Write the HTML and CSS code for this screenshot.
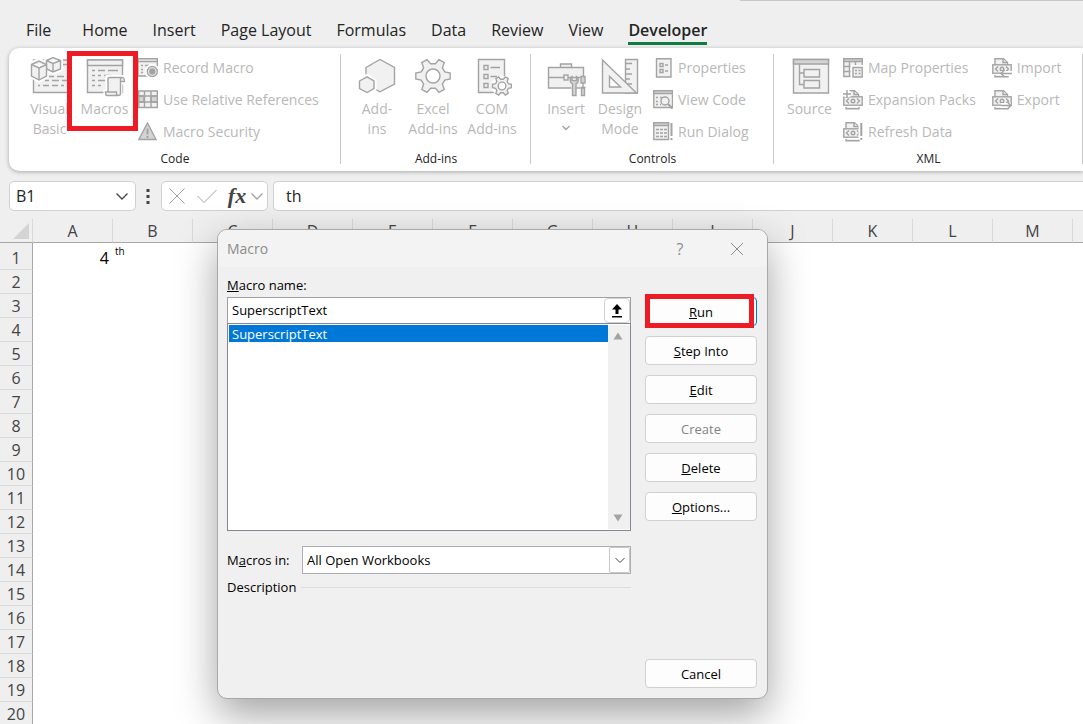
FILE: index.html
```html
<!DOCTYPE html>
<html lang="en">

<head>
  <meta charset="UTF-8" />
  <meta name="viewport" content="width=device-width, initial-scale=1.0" />
  <title>Excel - Macro</title>
  <link rel="stylesheet" href="styles.css">
</head>

<body>
  <svg class="symbols" aria-hidden="true">
    <symbol id="gear" viewBox="-20 -20 40 40">
      <path d="M11.8-4.1L17.2-3V3L11.8 4.1L9.4 8.2L11.2 13.4L6 16.4L2.4 12.3H-2.4L-6 16.4L-11.2 13.4L-9.4 8.2L-11.8 4.1L-17.2 3V-3L-11.8-4.1L-9.4-8.2L-11.2-13.4L-6-16.4L-2.4-12.3H2.4L6-16.4L11.2-13.4L9.4-8.2Z" vector-effect="non-scaling-stroke" />
      <circle r="7" fill="#fff" vector-effect="non-scaling-stroke" />
    </symbol>
    <symbol id="xml-doc" viewBox="0 0 20 20">
      <path d="M3 7V.7H11.5L15.5 4.5V7" />
      <path d="M11 1V4.5H15" />
      <rect x=".8" y="6.8" width="18.4" height="8.4" />
      <path d="M6 8.5L3.5 11L6 13.5M14 8.5L16.5 11L14 13.5" />
      <circle cx="10" cy="11" r="1.8" />
      <path d="M3 17V18.8H16V17" />
    </symbol>
  </svg>

  <header>
    <div class="title-search"></div>
    <nav class="tabs">
      <a href="#" class="file">File</a>
      <a href="#">Home</a>
      <a href="#">Insert</a>
      <a href="#">Page Layout</a>
      <a href="#">Formulas</a>
      <a href="#">Data</a>
      <a href="#">Review</a>
      <a href="#">View</a>
      <a href="#" class="active">Developer</a>
    </nav>
  </header>

  <div class="ribbon">
    <section class="group group-code">
      <div class="tools">
        <button class="big" disabled>
          <svg viewBox="0 0 40 40">
            <path d="M3.5 3H40V35.5H3.5Z" />
            <path d="M3 7.5H40" />
            <path d="M19 19.5H24M27 19.5H34M15 23.5H19M22 23.5H29M32 23.5H38M8 28.5H10M13 28.5H19M22 28.5H28M31 28.5H34" />
            <path class="halo" d="M1.5 7L9 3.5L16 7V19L9 23L1.5 19ZM16.5 3L23 0L30.5 3V12L23 15L16.5 12Z" />
            <path d="M16.5 3.5L23 .6L30.5 3.5V12L23 15L16.5 12ZM16.5 3.5L23 6.5L30.5 3.5M23 6.5V15" />
            <path d="M1.5 7.5L9 4L16.5 7.5V19L9 23L1.5 19ZM1.5 7.5L9 11L16.5 7.5M9 11V23" />
          </svg>
          <span>Visual Basic</span>
        </button>
        <button class="big" disabled>
          <svg viewBox="0 0 40 40">
            <path d="M2.5 3H37.5V35.5H2.5Z" />
            <path d="M2.5 3H37.5V8.5H2.5Z" />
            <path d="M7 13.5H10M13 13.5H20M23 13.5H33M7 18.5H10M13 18.5H16M19 18.5H26M7 23.5H10M13 23.5H20M7 28.5H10M13 28.5H16" />
            <path class="halo" d="M23 20.5H38V25H35V38.5H21V35H23Z" />
            <path d="M24.5 20.5H37C39 20.5 39.5 22 39.5 24.5H35.5V36.5C35.5 38 34.5 38.5 33 38.5H22C20.5 38.5 20.5 35 20.5 35H23V22C23 21 23.5 20.5 24.5 20.5ZM23 35H31.5V37C31.5 38 32.5 38.5 33.5 38.5M35.5 24.5V22C35.5 21 36 20.5 37 20.5" />
          </svg>
          <span>Macros</span>
          <i class="highlight"></i>
        </button>
        <div class="small-list">
          <button class="small" disabled>
            <svg viewBox="0 0 20 20">
              <path d="M0 .7H19.3V18H0Z" />
              <path d="M0 3.5H19.3M3 7.5H5M7 7.5H11M3 11.5H5M3 14.5H5" />
              <circle class="halo" cx="14.3" cy="13.5" r="5" />
              <circle cx="14.3" cy="13.5" r="5" />
              <circle class="solid" cx="14.3" cy="13.5" r="2.5" />
            </svg>
            Record Macro
          </button>
          <button class="small" disabled>
            <svg viewBox="0 0 20 20">
              <path d="M.7 1H19.3V17.5H.7Z" />
              <path class="shade" d="M.7 6H6V12H.7ZM13 6H19.3V12H13Z" />
              <path d="M.7 6H19.3M.7 12H19.3M6.5 1V17.5M13 1V17.5" />
            </svg>
            Use Relative References
          </button>
          <button class="small" disabled>
            <svg viewBox="0 0 20 20">
              <path class="shade" d="M9.5 1L18 17.5H.8Z" />
              <path class="thick" d="M9.5 6.5V12.5M9.5 14V16" />
            </svg>
            Macro Security
          </button>
        </div>
      </div>
      <h2>Code</h2>
    </section>

    <section class="group group-addins">
      <div class="tools">
        <button class="big" disabled>
          <svg viewBox="0 0 40 40">
            <path d="M9 10.5L23 2.5L37.5 10.5V27L23 34.8L9 27Z" />
            <path class="halo" d="M2.5 24L10 19.5L17 24V31.5L10 35.5L2.5 31.5Z" />
            <path d="M2.5 24L10 19.8L17 24V31.5L10 35.5L2.5 31.5Z" />
          </svg>
          <span>Add-<br>ins</span>
        </button>
        <button class="big" disabled>
          <svg viewBox="0 0 40 40">
            <use href="#gear" x="0" y="-1" width="40" height="40" />
          </svg>
          <span>Excel Add-ins</span>
        </button>
        <button class="big" disabled>
          <svg viewBox="0 0 40 40">
            <path d="M6.5 2.5H32.5V35.5H6.5Z" />
            <path d="M12 8.5H16V12.5H12ZM12 17.5H16V21.5H12ZM12 26.5H16V30.5H12ZM18.5 10.5H28M18.5 19.5H25" />
            <circle class="halo" cx="30" cy="29" r="8" />
            <use href="#gear" x="19" y="18" width="22" height="22" />
          </svg>
          <span>COM Add-ins</span>
        </button>
      </div>
      <h2>Add-ins</h2>
    </section>

    <section class="group group-controls">
      <div class="tools">
        <button class="big" disabled>
          <svg viewBox="0 0 40 40">
            <path d="M2.5 10.5H37.5V31H2.5ZM14.5 10.5V7H25.5V10.5M2.5 20.5H18M22 20.5H37" />
            <rect x="18" y="18" width="4" height="5" />
            <path class="halo" d="M28 22V37M37 20V37" />
            <path class="shade" d="M26 19.5V23.5H30.5V19.5C33 21 33 25.5 30 27V38.5H26.5V27C23.5 25.5 23.5 21 26 19.5Z" />
            <path class="shade" d="M35 19.5H39V26H35ZM37 26V30M34.5 30.5H39.5M35.5 31H38.5V38.5H35.5Z" />
          </svg>
          <span>Insert</span>
          <svg class="caret" viewBox="0 0 10 10"><path d="M1.5 3L5 6.5L8.5 3" /></svg>
        </button>
        <button class="big" disabled>
          <svg viewBox="0 0 40 40">
            <path d="M25.5 2.5H37.5V36H25.5Z" />
            <path d="M25.5 6.5H32M25.5 12H30M25.5 17H32M25.5 22H30M25.5 27H32" />
            <path d="M2.5 3L36.5 36H2.5Z" />
            <path class="paper" d="M9.5 19.5V30H20.5Z" />
          </svg>
          <span>Design Mode</span>
        </button>
        <div class="small-list">
          <button class="small" disabled>
            <svg viewBox="0 0 20 20">
              <path d="M3.5 .7H18V19H3.5Z" />
              <path d="M7 5.5H10V8.5H7ZM7 11.5H10V14.5H7ZM12 7H15M12 13H15" />
            </svg>
            Properties
          </button>
          <button class="small" disabled>
            <svg viewBox="0 0 20 20">
              <path d="M.8 .7H19.5V17.5H.8Z" />
              <path class="shade" d="M.8 .7H19.5V3.5H.8Z" />
              <path d="M3 7.5H5M3 11.5H5M3 14.5H5M7 7.5H9M7 14.5H8" />
              <circle cx="12" cy="11" r="4" />
              <path class="thick" d="M15 14L19.5 18.5" />
            </svg>
            View Code
          </button>
          <button class="small" disabled>
            <svg viewBox="0 0 20 20">
              <path d="M15.5 .7H.8V17.5H15.5Z" />
              <path class="shade" d="M.8 .7H15.5V3.5H.8Z" />
              <path d="M3 7.5H6M7 7.5H10M11 7.5H14M3 11H6M7 11H10M11 11H14M3 14.5H6M7 14.5H10M11 14.5H14" />
              <path class="thick" d="M18.5 1V14M18.5 16V18" />
            </svg>
            Run Dialog
          </button>
        </div>
      </div>
      <h2>Controls</h2>
    </section>

    <section class="group group-xml">
      <div class="tools">
        <button class="big" disabled>
          <svg viewBox="0 0 40 40">
            <path d="M3.5 2.5H38.5V36H3.5Z" />
            <path class="shade" d="M3.5 2.5H38.5V7H3.5Z" />
            <path d="M9.5 7V27.5H14M9.5 16H14" />
            <path d="M14 12.5H29.5V20H14ZM14 23.5H29.5V31H14Z" />
          </svg>
          <span>Source</span>
        </button>
        <div class="small-list">
          <button class="small" disabled>
            <svg viewBox="0 0 20 20">
              <path d="M.8 .7H19.2V18.5H.8Z" />
              <path class="shade" d="M.8 .7H19.2V3.5H.8Z" />
              <path d="M6.5 3.5V18.5M12.5 3.5V9M.8 8.5H12M.8 13.5H9" />
              <path class="halo" d="M10 9.5H19.2V19H10Z" />
              <path d="M10 9.5H19.2V19H10Z" />
              <path d="M12 12.5H14M15.5 12.5H17.5M12 15.5H14M15.5 15.5H17.5" />
            </svg>
            Map Properties
          </button>
          <button class="small" disabled>
            <svg viewBox="0 0 20 20">
              <use href="#xml-doc" width="20" height="20" />
              <path class="halo" d="M4 0V7M0 4H8" />
              <path d="M4 0V8M0 4H8" />
            </svg>
            Expansion Packs
          </button>
          <button class="small" disabled>
            <svg viewBox="0 0 20 20">
              <use href="#xml-doc" width="20" height="20" />
              <path class="halo" d="M18 1V18" />
              <path class="thick" d="M18.3 1V14M18.3 16V18" />
            </svg>
            Refresh Data
          </button>
        </div>
        <div class="small-list small-list-second">
          <button class="small" disabled>
            <svg viewBox="0 0 20 20">
              <use href="#xml-doc" width="20" height="20" />
              <path class="halo" d="M20 15.5H9" />
              <path d="M20 15.5H9M12.5 12L9 15.5L12.5 19" />
            </svg>
            Import
          </button>
          <button class="small" disabled>
            <svg viewBox="0 0 20 20">
              <use href="#xml-doc" width="20" height="20" />
              <path class="halo" d="M9 15.5H19" />
              <path d="M9 15.5H19M15.5 12L19 15.5L15.5 19" />
            </svg>
            Export
          </button>
        </div>
      </div>
      <h2>XML</h2>
    </section>
  </div>

  <div class="formula-bar">
    <div class="name-box">
      <input type="text" value="B1" aria-label="Name Box">
      <button aria-label="Open name list">
        <svg viewBox="0 0 14 14"><path d="M1.5 4.5L7 10L12.500 4.5" /></svg>
      </button>
    </div>
    <svg class="dots" viewBox="0 0 4 16"><path d="M.5 1H3.5V4H.5ZM.5 7H3.5V10H.5ZM.5 13H3.5V16H.5Z" /></svg>
    <div class="fx-box">
      <button aria-label="Cancel entry"><svg viewBox="0 0 20 20"><path d="M2.5 2.5L17.5 17.5M17.5 2.5L2.5 17.5" /></svg></button>
      <button aria-label="Enter"><svg viewBox="0 0 20 20"><path d="M.5 10L7 16.5L19.5 4" /></svg></button>
      <button class="fx">fx</button>
      <button class="fx-more" aria-label="More functions"><svg viewBox="0 0 14 14"><path d="M1.5 4.5L7 10L12.5 4.5" /></svg></button>
    </div>
    <input class="formula" type="text" value="th" aria-label="Formula">
  </div>

  <main class="sheet">
    <table>
      <thead>
        <tr>
          <th class="corner"><svg viewBox="0 0 18 18"><path d="M17 1V17H1Z" /></svg></th>
          <th>A</th><th>B</th><th>C</th><th>D</th><th>E</th><th>F</th><th>G</th>
          <th>H</th><th>I</th><th>J</th><th>K</th><th>L</th><th>M</th><th></th>
        </tr>
      </thead>
      <tbody>
        <tr class="first"><th>1</th><td class="number">4</td><td class="super">th</td><td colspan="12"></td></tr>
        <tr><th>2</th><td colspan="14"></td></tr>
        <tr><th>3</th><td colspan="14"></td></tr>
        <tr><th>4</th><td colspan="14"></td></tr>
        <tr><th>5</th><td colspan="14"></td></tr>
        <tr><th>6</th><td colspan="14"></td></tr>
        <tr><th>7</th><td colspan="14"></td></tr>
        <tr><th>8</th><td colspan="14"></td></tr>
        <tr><th>9</th><td colspan="14"></td></tr>
        <tr><th>10</th><td colspan="14"></td></tr>
        <tr><th>11</th><td colspan="14"></td></tr>
        <tr><th>12</th><td colspan="14"></td></tr>
        <tr><th>13</th><td colspan="14"></td></tr>
        <tr><th>14</th><td colspan="14"></td></tr>
        <tr><th>15</th><td colspan="14"></td></tr>
        <tr><th>16</th><td colspan="14"></td></tr>
        <tr><th>17</th><td colspan="14"></td></tr>
        <tr><th>18</th><td colspan="14"></td></tr>
        <tr><th>19</th><td colspan="14"></td></tr>
        <tr><th>20</th><td colspan="14"></td></tr>
      </tbody>
    </table>
  </main>

  <div class="dialog" role="dialog" aria-labelledby="dialog-title">
    <div class="dialog-title">
      <h1 id="dialog-title">Macro</h1>
      <button aria-label="Help">?</button>
      <button aria-label="Close"><svg viewBox="0 0 14 14"><path d="M1 1L13 13M13 1L1 13" /></svg></button>
    </div>
    <div class="dialog-body">
      <div class="fields">
        <label class="name-label" for="macro-name"><u>M</u>acro name:</label>
        <div class="macro-name">
          <input id="macro-name" type="text" value="SuperscriptText">
          <button aria-label="Collapse dialog">
            <svg viewBox="0 0 12 14"><path d="M6 0L11 5.5H7.5V10H4.5V5.5H1ZM1 12H11V13.5H1Z" /></svg>
          </button>
        </div>
        <div class="macro-list">
          <select size="11" aria-label="Macros">
            <option selected>SuperscriptText</option>
          </select>
          <div class="scrollbar">
            <svg viewBox="0 0 10 8"><path d="M5 .5L9.5 7.5H.5Z" /></svg>
            <svg viewBox="0 0 10 8"><path d="M5 7.5L9.5 .5H.5Z" /></svg>
          </div>
        </div>
        <div class="macros-in">
          <label for="macros-in">M<u>a</u>cros in:</label>
          <div class="combo">
            <select id="macros-in">
              <option>All Open Workbooks</option>
            </select>
            <span class="combo-arrow"><svg viewBox="0 0 10 10"><path d="M.5 3L5 7.5L9.5 3" /></svg></span>
          </div>
        </div>
        <div class="description">Description</div>
      </div>
      <div class="actions">
        <button class="default"><u>R</u>un<i class="highlight"></i></button>
        <button><u>S</u>tep Into</button>
        <button><u>E</u>dit</button>
        <button disabled>Create</button>
        <button><u>D</u>elete</button>
        <button><u>O</u>ptions...</button>
        <button class="cancel">Cancel</button>
      </div>
    </div>
  </div>
</body>

</html>
```
FILE: styles.css
```css
* {
  box-sizing: border-box;
}
body {
  margin: 0;
  height: 100vh;
  overflow: hidden;
  display: flex;
  flex-direction: column;
  position: relative;
  background: #efefef;
  color: #242424;
  font-family: "Open Sans", "Noto Sans", sans-serif;
  font-size: 16px;
}
button, input, select {
  font: inherit;
  color: inherit;
  margin: 0;
  padding: 0;
  border: none;
  background: none;
  outline: none;
}
svg {
  display: block;
  fill: none;
  stroke: #a3a3a3;
}
.symbols {
  position: absolute;
  width: 0;
  height: 0;
}

/* tabs */
header {
  height: 48px;
  flex: none;
  display: flex;
  flex-direction: column;
}
.title-search {
  align-self: flex-end;
  width: 343px;
  height: 1px;
  background: #c8c8c8;
}
.tabs {
  display: flex;
  gap: 25px;
  padding: 15px 26px 0;
}
.tabs a {
  height: 29px;
  line-height: 28px;
  color: #242424;
  text-decoration: none;
  white-space: nowrap;
}
.tabs .file {
  margin-right: 6px;
}
.tabs .active {
  font-weight: 600;
  border-bottom: 3px solid #107c41;
}

/* ribbon */
.ribbon {
  flex: none;
  margin-left: 9px;
  height: 123px;
  display: flex;
  background: #fff;
  border-radius: 10px 0 0 10px;
  box-shadow: 0 1px 4px rgba(0, 0, 0, 0.3);
}
.group {
  flex: none;
  position: relative;
  display: flex;
  flex-direction: column;
  padding-top: 4px;
}
.group::after {
  content: "";
  position: absolute;
  right: 0;
  top: 6px;
  bottom: 7px;
  width: 1px;
  background: #c8c8c8;
}
.group-code {
  width: 332px;
}
.group-addins {
  width: 190px;
}
.group-controls {
  width: 243px;
}
.group-xml {
  width: 309px;
}
.group h2 {
  margin: 0;
  font-size: 12px;
  font-weight: 400;
  line-height: 24px;
  text-align: center;
}
.tools {
  display: flex;
  height: 95px;
  padding-left: 8px;
}
.group-code .tools {
  padding-left: 13px;
}
.big {
  position: relative;
  width: 55px;
  padding-top: 5px;
  display: flex;
  flex-direction: column;
  align-items: center;
  font-size: 14px;
  line-height: 20px;
  color: #b8b8b8;
}
.group-addins .big {
  width: 56px;
}
.group-addins .big:last-child {
  width: 62px;
}
.group-controls .big {
  width: 54px;
}
.big svg {
  flex: none;
  width: 40px;
  height: 40px;
  margin-bottom: 2px;
}
.big .caret {
  width: 10px;
  height: 10px;
  margin-top: 4px;
}
.big path, .big rect, .small path, .small rect, .small circle {
  fill: #f1f1f1;
}
.big .caret path {
  fill: none;
}
.big .halo, .small .halo, .big .paper {
  fill: #fff;
}
.big svg, .small svg {
  fill: #f1f1f1;
  stroke-width: 1.4px;
}
.ribbon .halo {
  stroke: #fff;
  stroke-width: 5px;
}
.ribbon .shade {
  fill: #d4d4d4;
}
.ribbon .solid {
  fill: #a3a3a3;
}
.ribbon .thick {
  fill: none;
  stroke-width: 2px;
}
.small-list {
  margin-left: 6px;
}
.small-list-second {
  margin-left: 16px;
}
.small {
  display: flex;
  align-items: center;
  gap: 5px;
  height: 32px;
  padding-bottom: 1px;
  font-size: 14px;
  color: #b8b8b8;
  white-space: nowrap;
}
.small svg {
  width: 20px;
  height: 20px;
}
.highlight {
  position: absolute;
  border: 5px solid #ed1c24;
}
.big .highlight {
  inset: -1px -6px 16px -10px;
  z-index: 1;
}

/* formula bar */
.formula-bar {
  flex: none;
  display: flex;
  align-items: center;
  height: 30px;
  margin: 10px 0 8px 9px;
}
.name-box, .fx-box, .formula {
  height: 30px;
  border: 1px solid #d0d0d0;
  border-radius: 5px;
  background: #fff;
}
.name-box {
  display: flex;
  align-items: center;
  width: 127px;
  padding: 0 6px;
}
.name-box input {
  flex: 1;
  min-width: 0;
}
.name-box svg, .fx-more svg {
  width: 14px;
  height: 14px;
  stroke: #444;
  stroke-width: 1.3px;
}
.dots {
  width: 4px;
  height: 16px;
  margin: 0 11px 0 10px;
  fill: #444;
  stroke: none;
}
.fx-box {
  display: flex;
  align-items: center;
  gap: 10px;
  width: 107px;
  padding-left: 5px;
  margin-right: 5px;
}
.fx-box svg {
  width: 20px;
  height: 20px;
}
.fx-box .fx-more svg {
  width: 14px;
  height: 14px;
  stroke: #a3a3a3;
}
.fx {
  width: 20px;
  font-family: "Liberation Serif", serif;
  font-size: 22px;
  font-style: italic;
  font-weight: 700;
  line-height: 24px;
  color: #444;
}
.fx-box .fx-more {
  margin-left: -7px;
}
.formula {
  flex: 1;
  padding-left: 12px;
  border-right: none;
  border-radius: 5px 0 0 5px;
}

/* sheet */
.sheet {
  flex: 1;
  min-height: 0;
  overflow: hidden;
}
.sheet table {
  width: 1153px;
  table-layout: fixed;
  border-collapse: separate;
  border-spacing: 0;
  background: #fff;
}
.sheet th {
  height: 24px;
  padding: 0;
  background: #efefef;
  color: #444;
  font-weight: 400;
  line-height: 20px;
  border-right: 1px solid #d9d9d9;
  border-bottom: 1px solid #a8a8a8;
}
.sheet thead th {
  width: 80px;
}
.sheet thead .corner {
  width: 33px;
}
.corner svg {
  width: 18px;
  height: 18px;
  margin-left: 12px;
  fill: #d4d4d4;
  stroke: none;
}
.sheet tbody th {
  border-right-color: #a8a8a8;
  border-bottom-color: #d9d9d9;
}
.sheet td {
  padding: 0;
  line-height: 20px;
  color: #000;
}
.sheet .first th {
  height: 27px;
  padding-top: 4px;
}
.sheet .number {
  padding: 3px 4px 0 0;
  text-align: right;
}
.sheet .super {
  padding: 0 0 0 2px;
  font-size: 10px;
  line-height: 16px;
  vertical-align: top;
}

/* macro dialog */
.dialog {
  position: absolute;
  left: 217px;
  top: 229px;
  width: 551px;
  border: 1px solid #a8a8a8;
  border-radius: 10px;
  background: #f0f0f0;
  box-shadow: 0 16px 40px rgba(0, 0, 0, 0.36);
  color: #000;
  font-size: 13px;
  overflow: hidden;
}
.dialog-title {
  display: flex;
  align-items: center;
  height: 37px;
  padding: 0 15px 0 9px;
  background: #f3f3f3;
  color: #8c8c8c;
}
.dialog-title h1 {
  flex: 1;
  margin: 0;
  font-size: 14px;
  font-weight: 400;
}
.dialog-title button {
  display: flex;
  justify-content: center;
  width: 30px;
  margin-left: 27px;
  font-size: 16px;
}
.dialog-title svg {
  width: 14px;
  height: 14px;
  stroke: #8c8c8c;
}
.dialog-body {
  display: flex;
  gap: 14px;
  padding: 9px 10px 10px 9px;
}
.fields {
  flex: 1;
}
.name-label {
  display: block;
  height: 21px;
  line-height: 18px;
}
.macro-name {
  display: flex;
  height: 26px;
  border: 1px solid #a0a0a0;
  border-bottom: none;
  background: #fff;
}
.macro-name input {
  flex: 1;
  min-width: 0;
  padding: 0 0 2px 4px;
}
.macro-name button {
  display: flex;
  align-items: center;
  justify-content: center;
  width: 26px;
  border: 1px solid #d0d0d0;
  border-radius: 4px;
}
.macro-name svg {
  width: 12px;
  height: 14px;
  fill: #000;
  stroke: none;
}
.macro-list {
  display: flex;
  height: 208px;
  padding: 1px 0 1px 1px;
  border: 1px solid #828790;
  background: #fff;
}
.macro-list select {
  flex: 1;
  min-width: 0;
  overflow: hidden;
  border-radius: 0;
}
.macro-list option {
  height: 17px;
  min-height: 17px;
  padding: 0 3px;
  line-height: 17px;
  border-radius: 0;
}
.macro-list option:checked {
  background: #0078d7 linear-gradient(#0078d7, #0078d7);
  color: #fff;
}
.scrollbar {
  display: flex;
  flex-direction: column;
  justify-content: space-between;
  align-items: center;
  width: 22px;
  padding: 7px 2px 7px 0;
  background: #f0f0f0;
}
.scrollbar svg {
  width: 10px;
  height: 8px;
  fill: #a3a3a3;
  stroke: none;
}
.macros-in {
  display: flex;
  align-items: center;
  margin-top: 15px;
}
.macros-in label {
  width: 75px;
}
.combo {
  flex: 1;
  display: flex;
  height: 28px;
  border: 1px solid #adadb3;
  background: #fff;
}
.combo select {
  flex: 1;
  min-width: 0;
  padding-left: 4px;
  appearance: none;
}
.combo-arrow {
  display: flex;
  align-items: center;
  justify-content: center;
  width: 21px;
  border: 1px solid #c8c8c8;
  border-radius: 2px;
}
.combo-arrow svg {
  width: 10px;
  height: 10px;
  stroke: #444;
}
.description {
  display: flex;
  align-items: center;
  gap: 5px;
  margin-top: 4px;
  line-height: 18px;
}
.description::after {
  content: "";
  flex: 1;
  height: 1px;
  background: #dcdcdc;
}
.actions {
  display: flex;
  flex-direction: column;
  gap: 10px;
  width: 112px;
  padding-top: 21px;
}
.actions button {
  position: relative;
  height: 29px;
  border: 1px solid #d0d0d0;
  border-radius: 4px;
  background: #fdfdfd;
}
.actions .default {
  border-color: #0078d7;
}
.actions button:disabled {
  color: #838383;
}
.actions .cancel {
  margin-top: 128px;
}
.actions .highlight {
  inset: -4px 2px -3px -1px;
}
```
